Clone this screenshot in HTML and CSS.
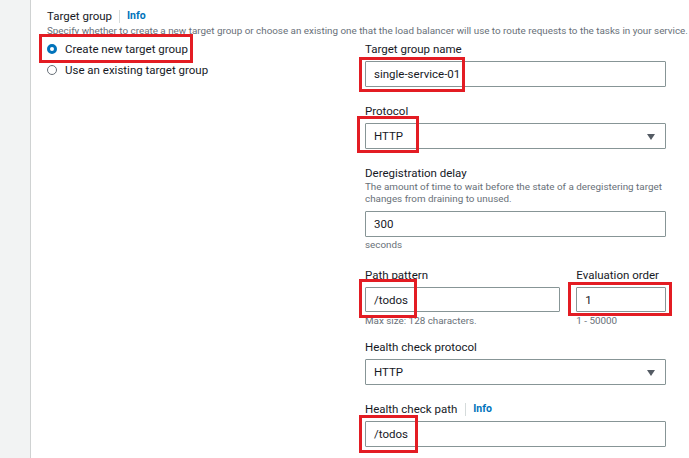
FILE: index.html
```html
<!DOCTYPE html>
<html lang="en">
<head>
<meta charset="utf-8">
<title>Target group</title>
<link rel="stylesheet" href="styles.css">
</head>
<body>
<div class="page">
  <aside class="sidebar"></aside>
  <main class="main">
    <div class="header">
      <span class="title">Target group</span>
      <span class="divider"></span>
      <a class="info">Info</a>
    </div>
    <p class="desc">Specify whether to create a new target group or choose an existing one that the load balancer will use to route requests to the tasks in your service.</p>
    <div class="grid">
      <div class="radios">
        <label class="radio-row">
          <span class="radio radio-on"></span>
          <span>Create new target group</span>
          <span class="mark mark-radio"></span>
        </label>
        <label class="radio-row">
          <span class="radio"></span>
          <span>Use an existing target group</span>
        </label>
      </div>
      <div class="form">
        <div class="field">
          <div class="label">Target group name</div>
          <div class="control">
            <div class="input">single-service-01</div>
            <span class="mark mark-name"></span>
          </div>
        </div>
        <div class="field">
          <div class="label">Protocol</div>
          <div class="control">
            <div class="input select">HTTP<span class="caret"></span></div>
            <span class="mark mark-proto"></span>
          </div>
        </div>
        <div class="field">
          <div class="label">Deregistration delay</div>
          <div class="help">The amount of time to wait before the state of a deregistering target changes from draining to unused.</div>
          <div class="control">
            <div class="input">300</div>
          </div>
          <div class="hint">seconds</div>
        </div>
        <div class="field-row">
          <div class="cell cell-path">
            <div class="label">Path pattern</div>
            <div class="control">
              <div class="input">/todos</div>
              <span class="mark mark-path"></span>
            </div>
            <div class="hint hint-low">Max size: 128 characters.</div>
          </div>
          <div class="cell cell-order">
            <div class="label">Evaluation order</div>
            <div class="control">
              <div class="input">1</div>
              <span class="mark mark-order"></span>
            </div>
            <div class="hint hint-low">1 - 50000</div>
          </div>
        </div>
        <div class="field field-after-row">
          <div class="label">Health check protocol</div>
          <div class="control">
            <div class="input select">HTTP<span class="caret"></span></div>
          </div>
        </div>
        <div class="field">
          <div class="label">Health check path <span class="divider"></span> <a class="info">Info</a></div>
          <div class="control">
            <div class="input">/todos</div>
            <span class="mark mark-hcpath"></span>
          </div>
        </div>
      </div>
    </div>
  </main>
</div>
</body>
</html>
```

FILE: styles.css
```css
* { box-sizing: border-box; }
html, body { margin: 0; padding: 0; background: #ffffff; }
body {
  font-family: Roboto, "Liberation Sans", Arial, sans-serif;
  color: #16191f;
  font-size: 11.5px;
  overflow: hidden;
}
.page { display: flex; width: 689px; height: 458px; }
.sidebar {
  width: 31px;
  flex: none;
  background: #f2f3f3;
  border-right: 1px solid #cfd2d2;
}
.main { flex: 1; padding: 8px 0 0 16px; }
.header { display: flex; align-items: center; height: 16px; line-height: 16px; }
.title { font-size: 11.5px; color: #16191f; }
.divider {
  display: inline-block;
  width: 1px;
  height: 13px;
  background: #d5dbdb;
  margin: 0 7px 0 7px;
  vertical-align: middle;
}
.info { color: #0073bb; font-weight: 700; font-size: 10.5px; }
.desc {
  margin: 0 0 3px;
  font-size: 9.85px;
  line-height: 14px;
  color: #687078;
  white-space: nowrap;
}
.grid { display: grid; grid-template-columns: 318px 301px; }
.radios { display: flex; flex-direction: column; gap: 5px; }
.radio-row {
  position: relative;
  display: flex;
  align-items: center;
  gap: 8px;
  height: 16px;
  line-height: 16px;
  font-size: 11.5px;
}
.radio {
  width: 10px;
  height: 10px;
  border-radius: 50%;
  border: 1px solid #687078;
  background: #fff;
  flex: none;
}
.radio-on {
  border: 3px solid #0073bb;
  background: #fff;
}
.form { display: flex; flex-direction: column; }
.field + .field, .field-row { margin-top: 16px; }
.form .field-after-row { margin-top: 12px; }
.label {
  font-size: 11.5px;
  line-height: 16px;
  height: 16px;
  margin-bottom: 4px;
  display: flex;
  align-items: center;
  white-space: nowrap;
}
.label .divider { margin: 0 7px 0 8px; }
.help {
  font-size: 9.85px;
  line-height: 12px;
  color: #687078;
  margin-top: -4px;
  margin-bottom: 6px;
  width: 305px;
}
.control { position: relative; }
.input {
  height: 26px;
  border: 1px solid #879596;
  border-radius: 1px;
  padding: 0 8px;
  display: flex;
  align-items: center;
  font-size: 11.5px;
  color: #16191f;
  background: #fff;
}
.select { position: relative; }
.caret {
  position: absolute;
  right: 10px;
  top: 10px;
  width: 0;
  height: 0;
  border-left: 4px solid transparent;
  border-right: 4px solid transparent;
  border-top: 6px solid #545b64;
}
.hint {
  font-size: 9.85px;
  line-height: 12px;
  color: #687078;
  margin-top: 2px;
  white-space: nowrap;
}
.hint-low { margin-top: 3px; }
.field-row { display: flex; gap: 16px; }
.cell-path { width: 196px; }
.cell-order { width: 90px; }
.field-row .input { height: 25px; }
.mark {
  position: absolute;
  border: 3px solid #e31c23;
  pointer-events: none;
}
.mark-radio { left: -8px; top: -7px; width: 154px; height: 29px; }
.mark-name { left: -6px; top: -4px; width: 106px; height: 35px; }
.mark-proto { left: -8px; top: -7px; width: 62px; height: 37px; }
.mark-path { left: -6px; top: -8px; width: 58px; height: 39px; }
.mark-order { left: -8px; top: -5px; width: 104px; height: 34px; }
.mark-hcpath { left: -6px; top: -6px; width: 59px; height: 38px; }
```
